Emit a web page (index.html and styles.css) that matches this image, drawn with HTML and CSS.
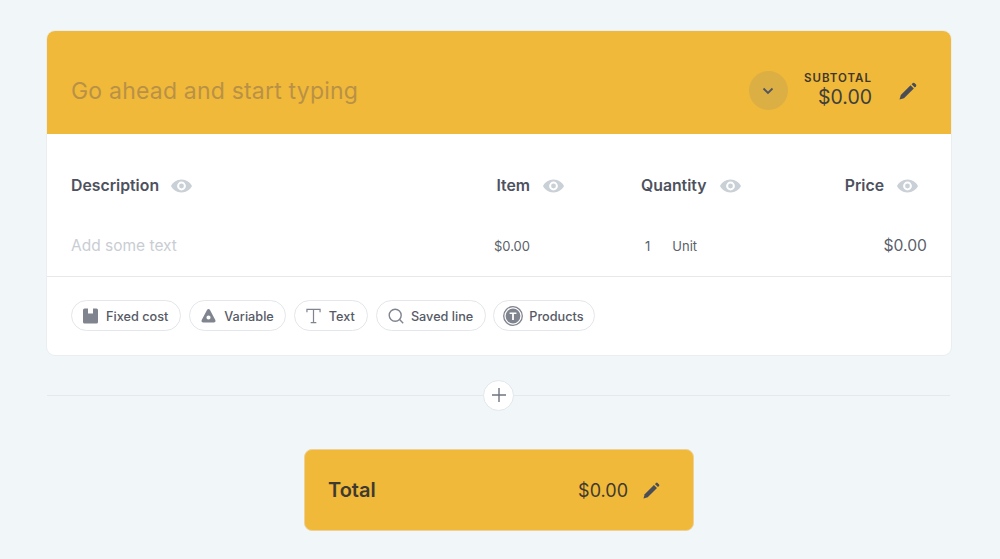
FILE: index.html
```html
<!DOCTYPE html>
<html lang="en">
<head>
<meta charset="UTF-8" />
<meta name="viewport" content="width=device-width, initial-scale=1" />
<title>Quote section</title>
<link rel="stylesheet" href="styles.css">
</head>
<body>
  <svg class="sprites" width="0" height="0">
    <symbol id="pencil" viewBox="0 0 18 18">
      <path d="M0.5 17.5 L1.8 13 L11.6 3.2 L14.8 6.4 L5 16.2 Z" />
      <path d="M12.6 2.2 L13.8 1 Q14.6 0.3 15.4 1 L17 2.6 Q17.7 3.4 17 4.2 L15.8 5.4 Z" />
    </symbol>
    <symbol id="eye" viewBox="0.5 0.5 21 13">
      <path fill-rule="evenodd" d="M11 0.5 C16 0.5 19.8 3.6 21.5 7 C19.8 10.4 16 13.5 11 13.5 C6 13.5 2.2 10.4 0.5 7 C2.2 3.6 6 0.5 11 0.5 Z M11 2.6 A4.4 4.4 0 1 0 11 11.4 A4.4 4.4 0 1 0 11 2.6 Z" />
      <circle cx="11" cy="7" r="2.4" />
    </symbol>
  </svg>

  <section class="section-card">
    <header class="section-head">
      <div class="section-title">Go ahead and start typing</div>
      <button class="collapse-btn">
        <svg width="12" height="8" viewBox="0 0 12 8"><path d="M1.5 1.5 L6 6 L10.5 1.5" fill="none" stroke="#4f5563" stroke-width="1.8" /></svg>
      </button>
      <div class="subtotal">
        <div class="subtotal-label">SUBTOTAL</div>
        <div class="subtotal-value">$0.00</div>
      </div>
      <svg class="pencil pencil-head"><use href="#pencil" /></svg>
    </header>

    <div class="line-grid line-head">
      <div class="col-desc">Description <svg class="eye"><use href="#eye" /></svg></div>
      <div class="col-item">Item <svg class="eye"><use href="#eye" /></svg></div>
      <div class="col-qty">Quantity <svg class="eye"><use href="#eye" /></svg></div>
      <div class="col-price">Price <svg class="eye"><use href="#eye" /></svg></div>
    </div>

    <div class="line-grid line-row">
      <div class="placeholder">Add some text</div>
      <div class="row-item">$0.00</div>
      <div class="row-qty"><span>1</span><span>Unit</span></div>
      <div class="row-price">$0.00</div>
    </div>

    <div class="chips">
      <button class="chip">
        <svg width="15" height="16" viewBox="0 0 15 16"><path d="M0 2 Q0 0.5 1.5 0.5 H5 V5.5 H10 V0.5 H13.5 Q15 0.5 15 2 V14 Q15 15.5 13.5 15.5 H1.5 Q0 15.5 0 14 Z" fill="#80848f" /></svg>
        Fixed cost
      </button>
      <button class="chip chip-variable">
        <svg width="15" height="16" viewBox="0 0 16 16"><path fill-rule="evenodd" d="M8 0.5 Q9 0.5 9.6 1.6 L15.4 12.6 Q16 14.8 14 15 H2 Q0 14.8 0.6 12.6 L6.4 1.6 Q7 0.5 8 0.5 Z M8 7.4 A2.2 2.2 0 1 0 8 11.8 A2.2 2.2 0 1 0 8 7.4 Z" fill="#80848f" /></svg>
        Variable
      </button>
      <button class="chip">
        <svg width="15" height="16" viewBox="0 0 16 16"><path d="M1 4 V1 H15 V4 M8 1 V15 M5 15 H11" fill="none" stroke="#80848f" stroke-width="1.3" /></svg>
        Text
      </button>
      <button class="chip chip-saved">
        <svg width="16" height="16" viewBox="0 0 16 16"><circle cx="7.2" cy="7.2" r="6" fill="none" stroke="#80848f" stroke-width="1.4" /><path d="M11.6 11.6 L15.2 15.2" stroke="#80848f" stroke-width="1.4" /></svg>
        Saved line
      </button>
      <button class="chip chip-products">
        <svg width="20" height="20" viewBox="0 0 20 20"><circle cx="10" cy="10" r="9.3" fill="none" stroke="#80848f" stroke-width="1.3" /><circle cx="10" cy="10" r="7.4" fill="#80848f" /><path d="M6.6 6.4 H13.4 V8 H10.9 V14 H9.1 V8 H6.6 Z" fill="#fff" /></svg>
        Products
      </button>
    </div>
  </section>

  <div class="add-row">
    <button class="add-btn">
      <svg width="14" height="14" viewBox="0 0 14 14"><path d="M7 0 V14 M0 7 H14" stroke="#6f7480" stroke-width="1.4" /></svg>
    </button>
  </div>

  <div class="total-card">
    <div class="total-label">Total</div>
    <div class="total-value">$0.00</div>
    <svg class="pencil pencil-total"><use href="#pencil" /></svg>
  </div>
</body>
</html>
```

FILE: styles.css
```css
body {
  margin: 0;
  height: 559px;
  overflow: hidden;
  background-color: #f1f6f9;
  font-family: 'Inter', 'Liberation Sans', sans-serif;
  color: #4d515e;
  padding: 31px 49px 0 47px;
  box-sizing: border-box;
}
button {
  font-family: inherit;
}
.sprites {
  display: block;
  height: 0;
}
.section-card {
  background-color: #fff;
  border-radius: 8px;
  box-shadow: 0 0 0 1px #e9eef1;
  overflow: hidden;
  height: 324px;
}
.section-head {
  display: flex;
  align-items: center;
  height: 103px;
  box-sizing: border-box;
  background-color: #f0b93a;
  padding: 16px 34px 0 24px;
}
.section-title {
  flex: 1;
  font-size: 23px;
  letter-spacing: 0.2px;
  color: #b99146;
}
.collapse-btn {
  width: 39px;
  height: 39px;
  border: none;
  border-radius: 50%;
  background-color: #dcaf45;
  padding: 0;
  margin-right: 16px;
  display: flex;
  align-items: center;
  justify-content: center;
}
.subtotal {
  text-align: right;
  margin-right: 27px;
}
.subtotal-label {
  font-size: 11.5px;
  font-weight: 600;
  letter-spacing: 1px;
  color: #40372a;
  line-height: 14px;
}
.subtotal-value {
  font-size: 19.5px;
  color: #40403c;
  line-height: 25px;
}
.pencil {
  fill: #4a4d55;
  display: block;
}
.pencil-head {
  width: 18px;
  height: 18px;
}
.line-grid {
  display: grid;
  grid-template-columns: 399px 94px 216px 1fr;
  padding: 0 24px;
}
.line-head {
  height: 85px;
  align-items: center;
  padding-top: 18px;
  box-sizing: border-box;
  font-size: 15.8px;
  font-weight: 600;
  color: #4d515e;
}
.line-head > div {
  display: flex;
  align-items: center;
  gap: 13px;
}
.line-head > .col-desc {
  gap: 12px;
}
.eye {
  width: 21px;
  height: 14px;
  fill: #c9d0d6;
}
.col-item,
.col-price {
  justify-content: flex-end;
}
.col-qty {
  padding-left: 77px;
}
.col-price {
  padding-right: 9px;
}
.line-row {
  height: 58px;
  box-sizing: border-box;
  border-bottom: 1px solid #e6e9ec;
  align-items: center;
  padding-bottom: 4px;
  font-size: 13px;
  color: #5b5f6b;
}
.placeholder {
  font-size: 15.5px;
  color: #c9cdd3;
}
.row-item {
  text-align: right;
  padding-right: 34px;
}
.row-qty {
  display: flex;
  gap: 22px;
  padding-left: 81px;
}
.row-price {
  text-align: right;
  font-size: 15.7px;
}
.chips {
  display: flex;
  gap: 8px;
  padding: 23px 24px 0;
}
.chip {
  display: flex;
  align-items: center;
  gap: 8px;
  height: 31px;
  padding: 1px 12px 0 11px;
  background-color: #fff;
  border: 1px solid #e3e6ea;
  border-radius: 16px;
  font-size: 12.7px;
  font-weight: 500;
  color: #565a66;
}
.chip-variable {
  padding-right: 11px;
}
.chip-saved {
  gap: 7px;
  margin-right: -1px;
}
.chip-products {
  padding: 1px 10px 0 9px;
  gap: 6px;
}
.add-row {
  margin-top: 24px;
  height: 32px;
  display: flex;
  justify-content: center;
  align-items: center;
  background: linear-gradient(#e4e9ed, #e4e9ed) center / 100% 1px no-repeat;
  margin-right: 1px;
}
.add-btn {
  width: 31px;
  height: 31px;
  border-radius: 50%;
  border: 1px solid #e3e7eb;
  background-color: #fff;
  padding: 0;
  display: flex;
  align-items: center;
  justify-content: center;
}
.total-card {
  width: 390px;
  height: 82px;
  box-sizing: border-box;
  margin: 38px auto 0 257px;
  display: flex;
  align-items: center;
  padding: 0 33px 0 23px;
  background-color: #f0b93a;
  border: 1px solid #efd09a;
  border-radius: 8px;
}
.total-label {
  flex: 1;
  font-size: 20px;
  font-weight: 600;
  color: #3f3a30;
}
.total-value {
  font-size: 18px;
  color: #3f3a30;
  margin-right: 15px;
}
.pencil-total {
  width: 17px;
  height: 17px;
}
```
